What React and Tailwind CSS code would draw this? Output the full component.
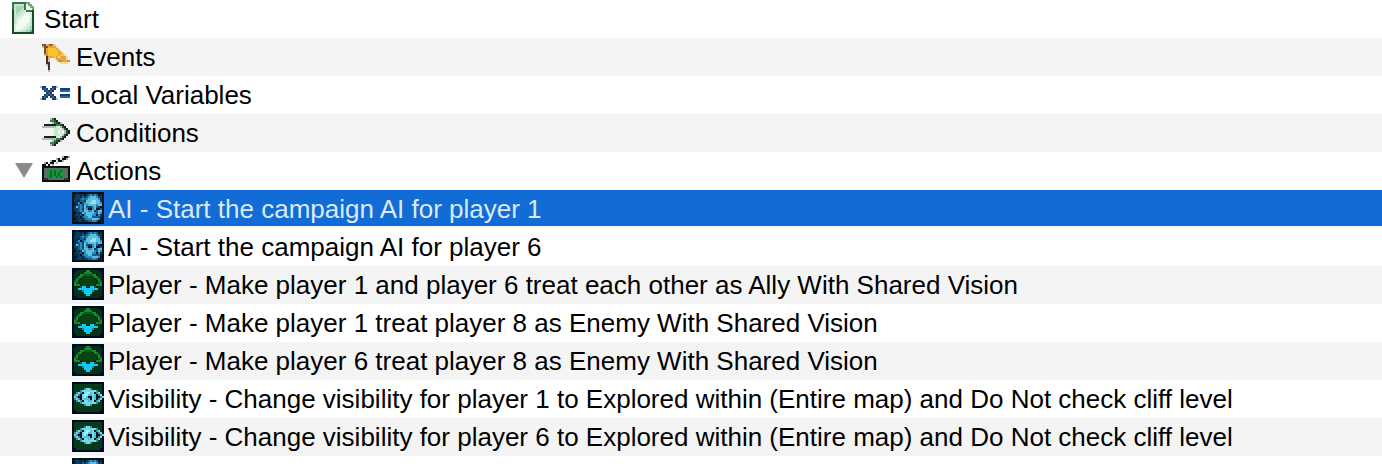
import React from 'react';

// 16x16 pixel icons, one character per pixel, "." is transparent
const FILE = {
  colors: { g: '#2f7a45', k: '#164d28', l: '#a9d3b4', w: '#f2faf4', m: '#c5e3cd', s: '#dceee1', f: '#6fa87d' },
  rows: [
    '..gggggggff.....',
    '..gmmmmmgwff....',
    '..gmllllgwwff...',
    '..gmlllmgwwwf...',
    '..kmllmmsgggk...',
    '..kmlmmsswwsk...',
    '..kmmmsswwwsk...',
    '..kmmsswwwwsk...',
    '..kmsswwwwwmk...',
    '..kmswwwwwwmk...',
    '..kmswwwwwsmk...',
    '..kswwwwwssmk...',
    '..kswwwwssmlk...',
    '..kswwwssmmlk...',
    '..ksssmmmllfk...',
    '..kkkkkkkkkkk...',
  ],
};

const FLAG = {
  colors: { b: '#7a5220', k: '#4a2f22', o: '#e8a440', y: '#fbc229', l: '#f3d9a4', c: '#c98a35', s: '#c8bcae' },
  rows: [
    '................',
    '................',
    '.bbscbol........',
    '.sbbooool.......',
    '..boyyyyol......',
    '..boyyyyyol.....',
    '..boyyyyyool....',
    '..scyyyyyoyyl...',
    '...koooyoloool..',
    '...ks..loooool..',
    '...ks...lccoooc.',
    '...kk.....llll..',
    '...sk...........',
    '....k...........',
    '....k...........',
    '....s...........',
  ],
};

const VARIABLE = {
  colors: { n: '#1d3a6c', b: '#3c5e91', s: '#a9bbd3', d: '#0f3f86', t: '#2d64a0' },
  rows: [
    '................',
    '................',
    '................',
    '................',
    'snn...nns.......',
    '.nbn.nbn..ddddd.',
    '..nbnbn...ttttt.',
    '...nbn..........',
    '..nbnbn...ddddd.',
    '.nbn.nbn..ttttt.',
    'snn...nns.......',
    '................',
    '................',
    '................',
    '................',
    '................',
  ],
};

const CONDITION = {
  colors: { k: '#10251a', g: '#27552f', m: '#6da573', l: '#c4ecc8', s: '#b4bbb6', h: '#2f8540' },
  rows: [
    '................',
    '.....shk........',
    '.....hhgk.......',
    '......shgks.....',
    '..kkkkkkhhgk....',
    '.sssssssl.sgk...',
    '.......lll.sgk..',
    '.......ll.l.sgk.',
    '.......ll.l.sgk.',
    '.......lll.sgk..',
    '..kkkkkkl.sgk...',
    '.ssssssshhgk....',
    '......shgks.....',
    '.....hhgk.......',
    '.....shk........',
    '................',
  ],
};

const CLAPPER = {
  colors: { k: '#0c0f0d', s: '#a9b1ab', w: '#e9ede9', d: '#283d30', t: '#56705f', g: '#17933c', h: '#0c6b2a' },
  rows: [
    '................',
    '...........skks.',
    '........skwkks..',
    '.....skkwkks....',
    '..skwkkws.......',
    '.kkwkws.........',
    '.kkkkkkkkkkkkkk.',
    '.kttttttttttttk.',
    '.kttghghgghgttk.',
    '.kttghghghggttk.',
    '.kttghghghggttk.',
    '.kttghgghghgttk.',
    '.kddttttttttddk.',
    '.kkkkkkkkkkkkkk.',
    '................',
    '................',
  ],
};

const AI = {
  colors: { k: '#03101d', d: '#0a2940', e: '#0c3d5e', m: '#145f8b', b: '#2c8dbb', l: '#5bbfe2', w: '#96e0f6' },
  rows: [
    'kkdkkkkkkkkkkkkk',
    'kdeedekembmbmkdk',
    'kdeedmemblllbeek',
    'keeembmblllllbdk',
    'keddmmelllwwllek',
    'kdebkmbllwwwllbk',
    'kdembelbllllbllk',
    'kelmbmlmeeblmekk',
    'keembelbkkblkkmk',
    'kdembmllbblemllk',
    'kkedelbllllbmlbk',
    'kdeemkblllbbkbek',
    'kddekmbbllmmmmdk',
    'kkdeedmbbblllbkk',
    'kddeedeemmbbmkdk',
    'kkkkkkkkkkkkkkkk',
  ],
};

const PLAYER = {
  colors: { k: '#020b24', d: '#043018', e: '#064212', g: '#138a2c', h: '#0c5a20', c: '#12c8f4', t: '#0b8fae' },
  rows: [
    'kkkkkkkkkkkkkkkk',
    'kkdddddggdddddkk',
    'kdddddggggdddddk',
    'kdddgghhhhggdddk',
    'kddggeeeeeeggddk',
    'kdghdeeeeeedhgdk',
    'khgdeeeeeeeedghk',
    'kghdeeeeeeeedhgk',
    'kgggdeeeeeedgggk',
    'kdddhccddcchdddk',
    'kddccccccccccddk',
    'kddddtcccctddddk',
    'kdddddccccdddddk',
    'kddddddccddddddk',
    'kkddddddddddddkk',
    'kkkkkkkkkkkkkkkk',
  ],
};

const EYE = {
  colors: { k: '#020b24', d: '#043a18', e: '#052c22', t: '#348f98', c: '#72dbe5', b: '#4fc3d2', w: '#a1f1f5' },
  rows: [
    'kkkkkkkkkkkkkkkk',
    'kddddddddddddddk',
    'kddddddddddddddk',
    'kddddetccteddddk',
    'kdddtccccccctddk',
    'kdtctkcwwbcktcdk',
    'ktctkcwwbbcbktck',
    'kctkkcwbkkcbkktc',
    'ktctkcbbbkcbktck',
    'kdtctkccbbcktcdk',
    'kdddtccccccctddk',
    'kddddetcctedeedk',
    'kddddddddddddddk',
    'kddddddddddddddk',
    'kkddddddddddddkk',
    'kkkkkkkkkkkkkkkk',
  ],
};

function PixelIcon({ icon }) {
  return (
    <svg
      className="w-8 h-8 shrink-0"
      viewBox="0 0 16 16"
      shapeRendering="crispEdges"
      aria-hidden="true"
    >
      {icon.rows.flatMap((row, y) =>
        [...row].map((c, x) =>
          icon.colors[c] ? (
            <rect key={`${x}-${y}`} x={x} y={y} width="1" height="1" fill={icon.colors[c]} />
          ) : null
        )
      )}
    </svg>
  );
}

const ROWS = [
  { level: 0, icon: FILE, text: 'Start' },
  { level: 1, icon: FLAG, text: 'Events' },
  { level: 1, icon: VARIABLE, text: 'Local Variables' },
  { level: 1, icon: CONDITION, text: 'Conditions' },
  { level: 1, icon: CLAPPER, text: 'Actions', open: true },
  { level: 2, icon: AI, text: 'AI - Start the campaign AI for player 1', selected: true },
  { level: 2, icon: AI, text: 'AI - Start the campaign AI for player 6' },
  { level: 2, icon: PLAYER, text: 'Player - Make player 1 and player 6 treat each other as Ally With Shared Vision' },
  { level: 2, icon: PLAYER, text: 'Player - Make player 1 treat player 8 as Enemy With Shared Vision' },
  { level: 2, icon: PLAYER, text: 'Player - Make player 6 treat player 8 as Enemy With Shared Vision' },
  { level: 2, icon: EYE, text: 'Visibility - Change visibility for player 1 to Explored within (Entire map) and Do Not check cliff level' },
  { level: 2, icon: EYE, text: 'Visibility - Change visibility for player 6 to Explored within (Entire map) and Do Not check cliff level' },
  { level: 2, icon: AI, text: '' },
];

const INDENT = ['pl-2', 'pl-10', 'pl-[72px]'];

function TreeRow({ row }) {
  return (
    <li
      role="treeitem"
      aria-level={row.level + 1}
      aria-selected={!!row.selected}
      className="h-[38px] odd:bg-white even:bg-[#f4f4f4]"
    >
      <div
        className={`flex h-9 items-center gap-1 ${row.open ? 'pl-3.5' : INDENT[row.level]} ${
          row.selected ? 'bg-[#116cd6] text-[#dce9f9]' : 'text-black'
        }`}
      >
        {row.open && (
          <button type="button" aria-label="Collapse" className="w-[22px] shrink-0">
            <svg className="w-5 h-4" viewBox="0 0 20 16" aria-hidden="true">
              <path d="M1 1h18l-9 15z" fill="#8b8b8b" />
            </svg>
          </button>
        )}
        <PixelIcon icon={row.icon} />
        <span className="whitespace-nowrap pt-0.5">{row.text}</span>
      </div>
    </li>
  );
}

export default function App() {
  return (
    <main className="h-screen overflow-hidden bg-white font-['Liberation_Sans',Arial,sans-serif] text-[26px] leading-8">
      <ul role="tree" aria-label="Trigger">
        {ROWS.map((row, i) => (
          <TreeRow key={i} row={row} />
        ))}
      </ul>
    </main>
  );
}
